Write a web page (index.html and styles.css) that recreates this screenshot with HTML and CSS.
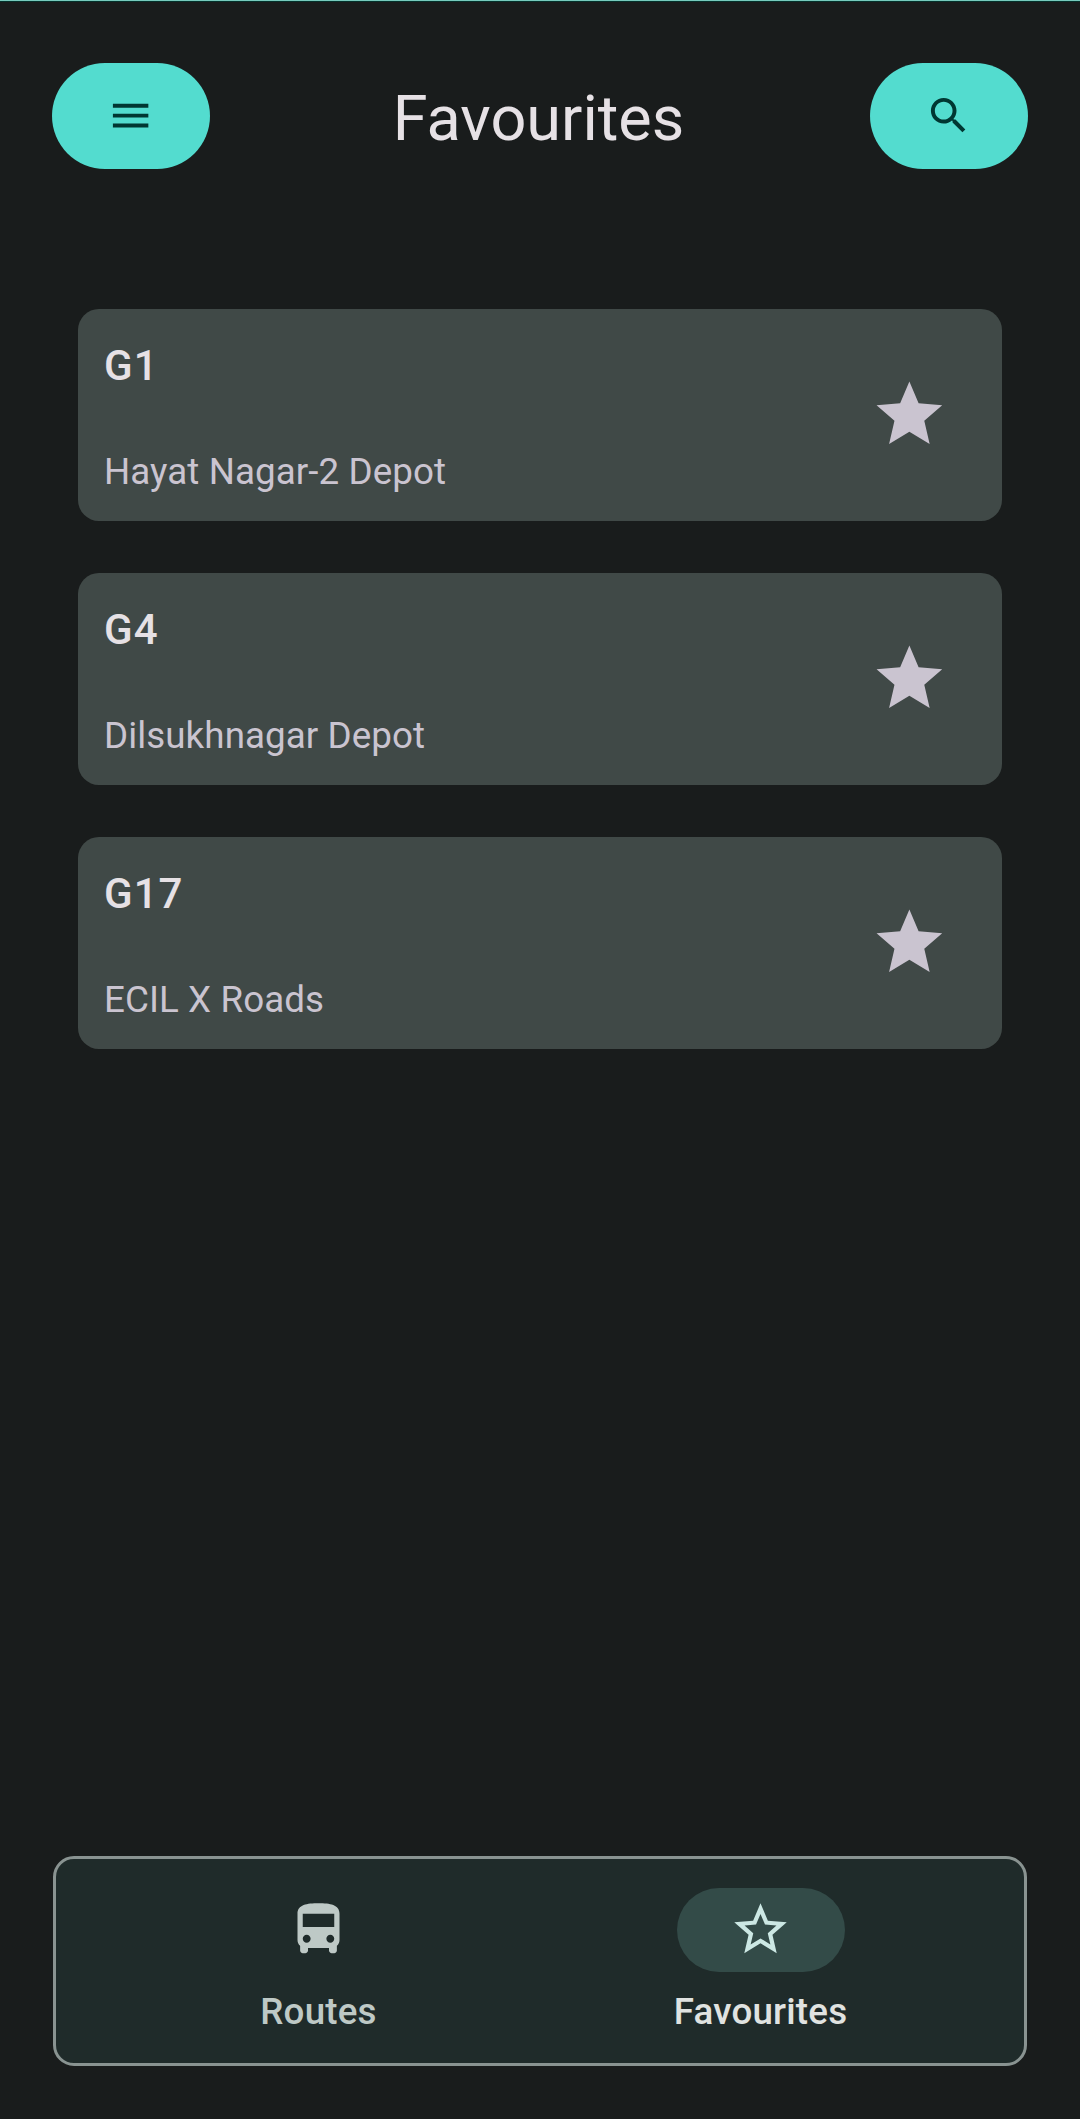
FILE: index.html
```html
<!DOCTYPE html>
<html lang="en">
<head>
<meta charset="utf-8">
<title>Favourites</title>
<link rel="stylesheet" href="styles.css">
</head>
<body>
<div class="app">
  <header class="top-bar">
    <button class="pill-button" aria-label="Menu">
      <svg viewBox="0 0 24 24"><path d="M3 18h18v-2H3v2zm0-5h18v-2H3v2zm0-7v2h18V6H3z"/></svg>
    </button>
    <h1 class="title">Favourites</h1>
    <button class="pill-button" aria-label="Search">
      <svg viewBox="0 0 24 24"><path d="M15.5 14h-.79l-.28-.27C15.41 12.59 16 11.11 16 9.5 16 5.91 13.09 3 9.5 3S3 5.91 3 9.5 5.91 16 9.5 16c1.61 0 3.09-.59 4.23-1.57l.27.28v.79l5 4.99L20.49 19l-4.99-5zm-6 0C7.01 14 5 11.99 5 9.5S7.01 5 9.5 5 14 7.01 14 9.5 11.99 14 9.5 14z"/></svg>
    </button>
  </header>

  <main class="routes">
    <article class="card">
      <div class="card-text">
        <h2 class="route">G1</h2>
        <p class="stop">Hayat Nagar-2 Depot</p>
      </div>
      <svg class="star" viewBox="0 0 24 24"><path d="M12 17.27 18.18 21l-1.64-7.03L22 9.24l-7.19-.61L12 2 9.19 8.63 2 9.24l5.46 4.73L5.82 21z"/></svg>
    </article>
    <article class="card">
      <div class="card-text">
        <h2 class="route">G4</h2>
        <p class="stop">Dilsukhnagar Depot</p>
      </div>
      <svg class="star" viewBox="0 0 24 24"><path d="M12 17.27 18.18 21l-1.64-7.03L22 9.24l-7.19-.61L12 2 9.19 8.63 2 9.24l5.46 4.73L5.82 21z"/></svg>
    </article>
    <article class="card">
      <div class="card-text">
        <h2 class="route">G17</h2>
        <p class="stop">ECIL X Roads</p>
      </div>
      <svg class="star" viewBox="0 0 24 24"><path d="M12 17.27 18.18 21l-1.64-7.03L22 9.24l-7.19-.61L12 2 9.19 8.63 2 9.24l5.46 4.73L5.82 21z"/></svg>
    </article>
  </main>

  <nav class="nav-bar">
    <a class="nav-item">
      <span class="indicator">
        <svg viewBox="0 0 24 24"><path d="M4 16c0 .88.39 1.67 1 2.22V20c0 .55.45 1 1 1h1c.55 0 1-.45 1-1v-1h8v1c0 .55.45 1 1 1h1c.55 0 1-.45 1-1v-1.78c.61-.55 1-1.34 1-2.22V6c0-3.5-3.58-4-8-4s-8 .5-8 4v10zm3.5 1c-.83 0-1.5-.67-1.5-1.5S6.67 14 7.5 14s1.5.67 1.5 1.5S8.33 17 7.5 17zm9 0c-.83 0-1.5-.67-1.5-1.5s.67-1.5 1.5-1.5 1.5.67 1.5 1.5-.67 1.5-1.5 1.5zm1.5-6H6V6h12v5z"/></svg>
      </span>
      <span class="label">Routes</span>
    </a>
    <a class="nav-item selected">
      <span class="indicator">
        <svg viewBox="0 0 24 24"><path d="M22 9.24l-7.19-.62L12 2 9.19 8.63 2 9.24l5.46 4.73L5.82 21 12 17.27 18.18 21l-1.63-7.03L22 9.24zM12 15.4l-3.76 2.27 1-4.28-3.32-2.88 4.38-.38L12 6.1l1.71 4.04 4.38.38-3.32 2.88 1 4.28L12 15.4z"/></svg>
      </span>
      <span class="label">Favourites</span>
    </a>
  </nav>
</div>
</body>
</html>
```
FILE: styles.css
```css
* {
  box-sizing: border-box;
  margin: 0;
}

body {
  background: #191c1c;
  font-family: Roboto, sans-serif;
}

svg {
  display: block;
  fill: currentColor;
}

.app {
  display: flex;
  flex-direction: column;
  height: 2119px;
  padding: 62px 52px 53px;
  border-top: 1px solid #76cbbd;
  box-shadow: inset 0 1px #04312b;
}

.top-bar {
  display: flex;
  align-items: center;
  justify-content: space-between;
  height: 106px;
}

.pill-button {
  display: flex;
  align-items: center;
  justify-content: center;
  width: 158px;
  height: 106px;
  padding: 0;
  border: 0;
  border-radius: 53px;
  background: #53dccf;
  color: #003732;
}

.pill-button svg {
  width: 47.25px;
  height: 47.25px;
}

.title {
  padding: 6px 3px 0 0;
  color: #e6e1e5;
  font-size: 63px;
  font-weight: 400;
  line-height: 84px;
}

.routes {
  display: flex;
  flex: 1;
  flex-direction: column;
  gap: 52px;
  padding: 140px 26px 0;
}

.card {
  display: flex;
  align-items: center;
  justify-content: space-between;
  height: 212px;
  padding: 0 53px 0 26px;
  border-radius: 21px;
  background: #404947;
}

.card-text {
  display: flex;
  flex-direction: column;
  gap: 53px;
  padding-top: 7px;
}

.route {
  color: #e6e1e5;
  font-size: 42px;
  font-weight: 500;
  line-height: 54px;
  letter-spacing: 1.05px;
}

.stop {
  color: #cac4d0;
  font-size: 36.75px;
  line-height: 52px;
  letter-spacing: 0.08px;
}

.star {
  width: 78.75px;
  height: 78.75px;
  margin-bottom: 2px;
  color: #cac4d0;
}

.nav-bar {
  display: grid;
  grid-template-columns: 442px 442px;
  justify-content: center;
  height: 210px;
  margin: 0 1px;
  padding-top: 29px;
  border: 3px solid #899391;
  border-radius: 21px;
  background: #1f2b2a;
}

.nav-item {
  display: flex;
  flex-direction: column;
  align-items: center;
  gap: 19px;
  color: #bec9c6;
}

.indicator {
  display: flex;
  align-items: center;
  justify-content: center;
  width: 168px;
  height: 84px;
  padding: 0 1px 1px 0;
  border-radius: 42px;
}

.indicator svg {
  width: 63px;
  height: 63px;
}

.label {
  padding-right: 1px;
  font-size: 36.75px;
  font-weight: 500;
  line-height: 42px;
  letter-spacing: 0.2px;
}

.selected .indicator {
  background: #334b48;
  color: #cce8e4;
}

.selected .label {
  color: #e0e3e1;
}
```
